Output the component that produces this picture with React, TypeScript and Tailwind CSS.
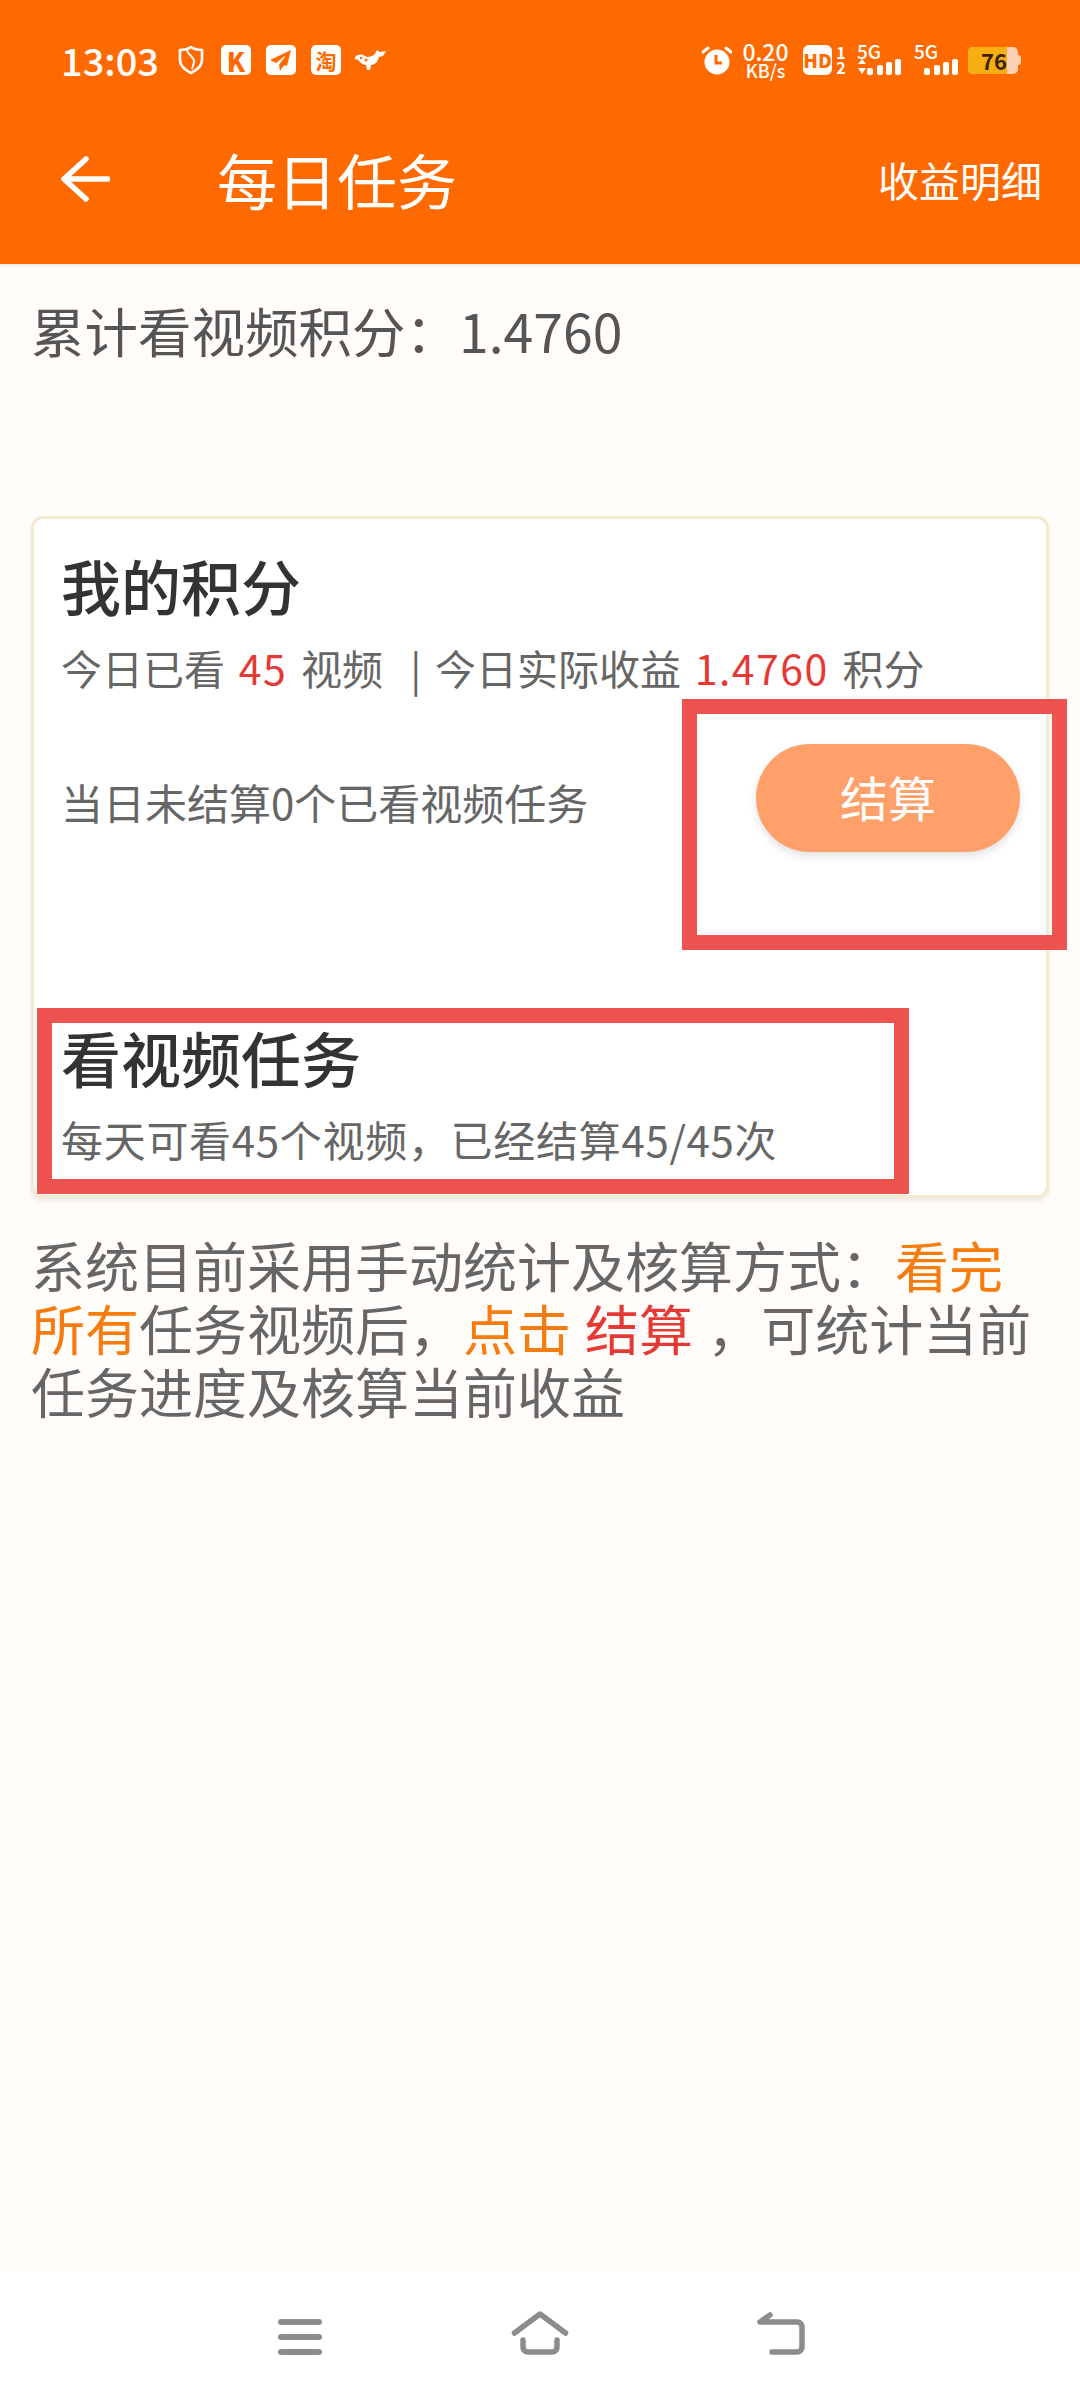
function ShieldIcon() {
  return (
    <svg width="26" height="30" viewBox="0 0 26 30" fill="none" stroke="white" strokeWidth="2.6" strokeLinejoin="round">
      <path d="M13 2c3 2 7 3 11 3v10c0 6-5 10-11 13C7 25 2 21 2 15V5c4 0 8-1 11-3z" />
      <path d="M9 4c-1 5 8 8 7 13-.4 2-1 4-2 7" strokeWidth="2" />
    </svg>
  );
}

function PlaneIcon() {
  return (
    <svg width="30" height="30" viewBox="0 0 30 30">
      <rect width="30" height="30" rx="5" fill="white" />
      <path d="M25 5 4 15l6 3 10-8-7 10 1 6 4-6 3 1z" fill="#ff6a00" />
    </svg>
  );
}

function BirdIcon() {
  return (
    <svg width="32" height="24" viewBox="0 0 32 24" fill="white">
      <path d="M0 9c2-2 5-3 8-2l4 2c3 0 6-1 8-3l2-4 3 2 6-1-3 5-4 1-2 5c-2 2-4 3-6 3l-1 5h-3l-1-5c-3 0-5-2-7-4l-2-2-2 1z" />
      <circle cx="11" cy="12" r="1.5" fill="#ff6a00" />
      <circle cx="6" cy="10" r="1.2" fill="#ff6a00" />
    </svg>
  );
}

function AlarmIcon() {
  return (
    <svg width="30" height="30" viewBox="0 0 30 30" fill="none">
      <circle cx="15" cy="17" r="12.5" fill="white" />
      <path d="M1 7l5-4M29 7l-5-4" stroke="white" strokeWidth="3" strokeLinecap="round" />
      <path d="M14 10v8h6" stroke="#ff6a00" strokeWidth="3" />
    </svg>
  );
}

function SignalBars({ arrows }: { arrows?: boolean }) {
  return (
    <div className="flex flex-col items-start">
      <span className="text-[19px] leading-[14px] font-medium text-white">5G</span>
      <svg width="44" height="18" viewBox="0 0 44 18" fill="white">
        {arrows ? <path d="M1 6l4-5 4 5zM1 10h8l-4 6z" /> : null}
        <rect x="10" y="10" width="6" height="7" rx="2" />
        <rect x="20" y="7" width="6" height="10" rx="2" />
        <rect x="29" y="4" width="6" height="13" rx="2" />
        <rect x="38" y="1" width="6" height="16" rx="2" />
      </svg>
    </div>
  );
}

function StatusBar() {
  return (
    <div className="flex h-[40px] items-center justify-between pl-[61px] pr-[59px] text-white">
      <div className="flex items-center">
        <span className="mr-[19px] text-[38px] leading-none font-medium">13:03</span>
        <ShieldIcon />
        <span className="ml-[17px] flex h-[30px] w-[30px] items-center justify-center rounded-[5px] bg-white text-[26px] font-black text-[#ff6a00]">
          K
        </span>
        <span className="ml-[15px] flex">
          <PlaneIcon />
        </span>
        <span className="ml-[15px] flex h-[30px] w-[30px] items-center justify-center rounded-[5px] bg-white text-[21px] leading-none font-bold text-[#ff6a00]">
          淘
        </span>
        <span className="ml-[14px] flex">
          <BirdIcon />
        </span>
      </div>
      <div className="flex items-center">
        <AlarmIcon />
        <div className="ml-[9px] flex w-[49px] flex-col items-center font-medium">
          <span className="text-[23px] leading-[19px]">0.20</span>
          <span className="text-[18px] leading-[18px]">KB/s</span>
        </div>
        <span className="ml-[13px] flex h-[30px] w-[29px] items-center justify-center rounded-[6px] bg-white text-[19px] font-black text-[#ff6a00]">
          HD
        </span>
        <div className="ml-[3px] flex w-[12px] flex-col items-center text-[16px] leading-[15px] font-bold">
          <span>1</span>
          <span>2</span>
        </div>
        <div className="ml-[10px]">
          <SignalBars arrows />
        </div>
        <div className="ml-[13px]">
          <SignalBars />
        </div>
        <div className="ml-[10px] flex items-center">
          <div className="flex h-[27px] w-[50px] rounded-[5px] bg-[#fbd0b4]">
            <div className="flex w-[39px] items-center justify-end rounded-l-[5px] bg-[#f6ae12] text-[22px] leading-none font-bold text-[#3a2400]">
              76
            </div>
          </div>
          <div className="h-[10px] w-[3px] rounded-r-sm bg-[#fbd0b4]" />
        </div>
      </div>
    </div>
  );
}

function Header() {
  return (
    <header className="h-[264px] bg-[#ff6a00] pt-[40px] shadow-[0_2px_4px_rgba(0,0,0,0.08)]">
      <StatusBar />
      <div className="mt-[69px] flex h-[60px] items-center pl-[60px] pr-[38px] text-white">
        <svg width="50" height="48" viewBox="0 0 50 48" fill="none" stroke="white" strokeWidth="5.5" strokeLinecap="round" strokeLinejoin="round">
          <path d="M26 4 4 24l22 20M4 24h44" />
        </svg>
        <h1 className="ml-[107px] text-[60px] leading-none">每日任务</h1>
        <span className="ml-auto text-[41px] leading-none">收益明细</span>
      </div>
    </header>
  );
}

function BottomNav() {
  return (
    <nav className="flex h-[130px] items-start bg-white pl-[278px] pt-[40px]">
      <svg className="mt-[7px]" width="44" height="40" viewBox="0 0 44 40" fill="none" stroke="#8c8c8c" strokeWidth="6" strokeLinecap="round">
        <path d="M3 5h38M3 20h38M3 35h38" />
      </svg>
      <svg className="ml-[188px]" width="60" height="46" viewBox="0 0 60 46" fill="none" stroke="#8c8c8c" strokeWidth="5.5" strokeLinecap="round" strokeLinejoin="round">
        <path d="M4.5 23 30 4l25.500 19M13 30v7c0 3 2 5 5 5h24c3 0 5-2 5-5v-7" />
      </svg>
      <svg className="ml-[185px]" width="50" height="46" viewBox="0 0 50 46" fill="none" stroke="#8c8c8c" strokeWidth="5.5" strokeLinecap="round" strokeLinejoin="round">
        <path d="M15 5 5 12h37c3 0 5 2 5 5v20c0 3-2 5-5 5H17" />
      </svg>
    </nav>
  );
}

export default function App() {
  return (
    <div className="flex h-[2400px] w-[1080px] flex-col bg-[#fffcf9] font-['Noto_Sans_CJK_SC','Noto_Sans',sans-serif]">
      <Header />
      <main className="flex-1 px-[31px]">
        <p className="mt-[33px] text-[53.500px] leading-[66px] text-[#555]">累计看视频积分：1.4760</p>

        <section className="relative mt-[153px] h-[682px] rounded-[12px] border-[3px] border-[#f3ead0] bg-white pl-[27px] shadow-[0_3px_4px_rgba(0,0,0,0.08)]">
          <h2 className="mt-[31px] text-[60px] leading-[70px] font-medium text-[#333]">我的积分</h2>
          <p className="mt-[22px] text-[41px] leading-[50px] whitespace-nowrap text-[#666] [word-spacing:4.5px]">
            今日已看 <span className="tracking-[1.5px] text-[#e53935]">45</span> 视频 &nbsp;| 今日实际收益{' '}
            <span className="tracking-[1.5px] text-[#e53935]">1.4760</span> 积分
          </p>
          <div className="mt-[52px] flex items-center justify-between pr-[26px]">
            <p className="mt-[8px] text-[42px] leading-[50px] text-[#666]">当日未结算0个已看视频任务</p>
            <button
              type="button"
              className="h-[108px] w-[264px] rounded-full bg-[#ffa06a] pb-[4px] text-[48px] text-white shadow-[0_4px_8px_rgba(0,0,0,0.12)]"
            >
              结算
            </button>
          </div>
          <h2 className="mt-[170px] text-[60px] leading-[70px] font-medium text-[#333]">看视频任务</h2>
          <p className="mt-[22px] text-[42px] leading-[50px] tracking-[0.7px] text-[#666]">每天可看45个视频，已经结算45/45次</p>

          <div className="absolute left-[648px] top-[180px] h-[251px] w-[385px] border-[15px] border-[#ef5350]" />
          <div className="absolute left-[3px] top-[489px] h-[186px] w-[872px] border-[15px] border-[#ef5350]" />
        </section>

        <p className="mt-[35px] text-[54px] leading-[63px] text-[#666] [word-spacing:2px]">
          系统目前采用手动统计及核算方式：<span className="text-[#f57c0d]">看完所有</span>任务视频后，
          <span className="text-[#f57c0d]">点击</span> <span className="text-[#e53935]">结算</span> ，可统计当前任务进度及核算当前收益
        </p>
      </main>
      <BottomNav />
    </div>
  );
}
